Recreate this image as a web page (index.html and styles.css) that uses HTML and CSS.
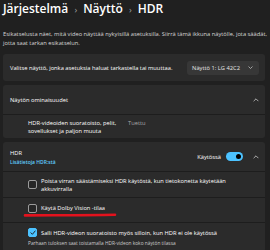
FILE: index.html
```html
<!DOCTYPE html>
<html lang="fi">
<head>
    <meta charset="UTF-8">
    <meta name="viewport" content="width=device-width, initial-scale=1.0">
    <title>HDR</title>
    <link rel="stylesheet" href="styles.css">
</head>
<body>
    <div class="page">
        <h1 class="crumbs">Järjestelmä <span class="sep">›</span> Näyttö <span class="sep">›</span> HDR</h1>
        <p class="intro">Esikatselusta näet, mitä video näyttää nykyisillä asetuksilla. Siirrä tämä ikkuna näytölle, jota säädät,<br>jotta saat tarkan esikatselun.</p>

        <div class="card row">
            <span class="label">Valitse näyttö, jonka asetuksia haluat tarkastella tai muuttaa.</span>
            <div class="select">
                <span>Näyttö 1: LG 42C2</span>
                <svg width="5" height="3" viewBox="0 0 10 6"><path d="M1 1l4 4 4-4" fill="none" stroke="#cfcfcf" stroke-width="1.4"/></svg>
            </div>
        </div>

        <div class="card">
            <div class="row head">
                <span class="label">Näytön ominaisuudet</span>
                <svg class="chev" width="6" height="4" viewBox="0 0 10 6"><path d="M1 5l4-4 4 4" fill="none" stroke="#cfcfcf" stroke-width="1.3"/></svg>
            </div>
            <div class="sub props">
                <span class="prop-name">HDR-videoiden suoratoisto, pelit,<br>sovellukset ja paljon muuta</span>
                <span class="prop-val">Tuettu</span>
            </div>
        </div>

        <div class="card">
            <div class="row head tall">
                <div>
                    <div class="label">HDR</div>
                    <a class="link">Lisätietoja HDR:stä</a>
                </div>
                <div class="state">
                    <span>Käytössä</span>
                    <span class="toggle"><span class="knob"></span></span>
                    <svg class="chev" width="6" height="4" viewBox="0 0 10 6"><path d="M1 5l4-4 4 4" fill="none" stroke="#cfcfcf" stroke-width="1.3"/></svg>
                </div>
            </div>
            <div class="sub check-row">
                <span class="box"></span>
                <span>Poista virran säästämiseksi HDR käytöstä, kun tietokonetta käytetään<br>akkuvirralla</span>
            </div>
            <div class="sub check-row dolby">
                <span class="box"></span>
                <span>Käytä Dolby Vision -tilaa</span>
                <svg class="mark" width="96" height="6" viewBox="0 0 96 6"><path d="M2 3.4C30 3.2 60 3.4 92 2.8" fill="none" stroke="#e3121d" stroke-width="2.6" stroke-linecap="round"/></svg>
            </div>
            <div class="sub check-row last">
                <span class="box on"><svg width="6" height="5" viewBox="0 0 10 8"><path d="M1 4l3 3 5-6" fill="none" stroke="#1a1a1a" stroke-width="1.5"/></svg></span>
                <span>Salli HDR-videon suoratoisto myös silloin, kun HDR ei ole käytössä</span>
            </div>
            <p class="hint">Parhaan tuloksen saat toistamalla HDR-videon koko näytön tilassa</p>
        </div>
    </div>
</body>
</html>
```

FILE: styles.css
```css
body {
    margin: 0;
    background-color: #202020;
    color: #ffffff;
    font-family: "Open Sans", "Noto Sans", sans-serif;
    overflow: hidden;
}
.page {
    width: 262px;
    padding: 0 0 0 3px;
}
.crumbs {
    margin: 0;
    padding-top: 1px;
    font-size: 12px;
    font-weight: 600;
    line-height: 16px;
    white-space: nowrap;
}
.crumbs .sep {
    color: #a0a0a0;
    font-weight: 400;
    font-size: 9px;
    margin: 0 3px;
}
.intro {
    margin: 12px 0 6px;
    font-size: 5.75px;
    line-height: 9px;
    color: #d6d6d6;
    white-space: nowrap;
}
.card {
    background-color: #2b2b2b;
    border-radius: 3px;
    margin-bottom: 4px;
    font-size: 5.75px;
    overflow: hidden;
}
.row {
    display: flex;
    align-items: center;
    justify-content: space-between;
    padding: 0 6px 0 7px;
    height: 27px;
}
.label {
    white-space: nowrap;
}
.select {
    display: flex;
    align-items: center;
    gap: 8px;
    height: 14px;
    padding: 0 6px 0 5px;
    background-color: #373737;
    border-radius: 3px;
    color: #e8e8e8;
}
.head {
    height: 29px;
    border-bottom: 1px solid #1d1d1d;
}
.chev {
    display: block;
}
.sub {
    padding-left: 25px;
    border-bottom: 1px solid #1d1d1d;
}
.props {
    display: flex;
    height: 23px;
    align-items: center;
    border-bottom: none;
    line-height: 8px;
}
.prop-name {
    width: 100px;
    white-space: nowrap;
}
.prop-val {
    align-self: flex-start;
    margin-top: 4px;
    color: #a8a8a8;
}
.link {
    display: block;
    color: #60cdff;
    font-size: 5px;
    font-weight: 600;
    margin-top: 2px;
}
.state {
    display: flex;
    align-items: center;
    gap: 5px;
}
.toggle {
    width: 17px;
    height: 9px;
    border-radius: 5px;
    background-color: #4cc2ff;
    display: flex;
    align-items: center;
    justify-content: flex-end;
    padding-right: 2px;
    box-sizing: border-box;
    margin-right: 5px;
}
.knob {
    width: 5px;
    height: 5px;
    border-radius: 50%;
    background-color: #000;
}
.check-row {
    display: flex;
    align-items: center;
    gap: 4px;
    height: 25px;
    line-height: 8px;
    white-space: nowrap;
    position: relative;
}
.box {
    width: 7px;
    height: 7px;
    border: 1px solid #9b9b9b;
    border-radius: 2px;
    background-color: #262626;
    flex-shrink: 0;
}
.box.on {
    background-color: #4cc2ff;
    border-color: #4cc2ff;
    display: flex;
    align-items: center;
    justify-content: center;
}
.dolby {
    align-items: flex-start;
    box-sizing: border-box;
    padding-top: 6px;
}
.mark {
    position: absolute;
    left: 20px;
    top: 14px;
}
.last {
    border-bottom: none;
    height: 14px;
    align-items: flex-end;
}
.hint {
    margin: 3px 0 0 25px;
    font-size: 4.8px;
    color: #cccccc;
    padding-bottom: 6px;
}
```
